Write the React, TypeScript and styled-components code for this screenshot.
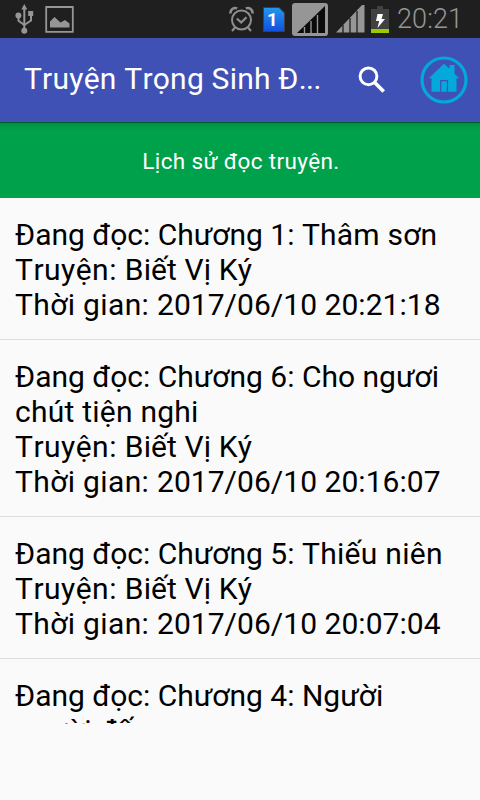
import React from "react";
import styled, { createGlobalStyle } from "styled-components";

const GlobalStyle = createGlobalStyle`
  * { box-sizing: border-box; }
  body { margin: 0; background: #fafafa; font-family: Roboto, sans-serif; font-kerning: none; }
`;

const Screen = styled.div`
  display: flex;
  flex-direction: column;
  width: 480px;
  height: 800px;
  overflow: hidden;
  background: #fafafa;
`;

const StatusBar = styled.header`
  display: flex;
  flex: none;
  justify-content: space-between;
  height: 38px;
  padding: 0 17px 0 14px;
  background: #1f1f1f;
`;

const StatusGroup = styled.div`
  display: flex;
  align-items: center;
`;

const StatusItem = styled.span<{ $before?: number }>`
  flex: none;
  margin-left: ${(p) => p.$before ?? 0}px;
  svg { display: block; }
`;

const Clock = styled.time`
  width: 66px;
  margin-left: 8px;
  color: #969696;
  font-size: 27px;
  font-weight: 300;
  line-height: 38px;
  letter-spacing: 0.1px;
  white-space: nowrap;
`;

const AppBar = styled.div`
  display: flex;
  flex: none;
  align-items: center;
  height: 84px;
  padding: 0 12px 0 24px;
  background: #3f51b5;
`;

const Title = styled.h1`
  flex: 1;
  margin: 0 0 2px;
  color: #fff;
  font-size: 30px;
  font-weight: 400;
  line-height: 40px;
  white-space: nowrap;
`;

const IconButton = styled.button<{ $size: number; $gap?: number }>`
  flex: none;
  width: ${(p) => p.$size}px;
  height: ${(p) => p.$size}px;
  margin: 0 ${(p) => p.$gap ?? 0}px 0 0;
  padding: 0;
  border: 0;
  background: none;
  svg { display: block; }
`;

const Banner = styled.h2`
  flex: none;
  height: 76px;
  margin: 0;
  padding-left: 2px;
  background: linear-gradient(#00602b 0, #00602b 1px, #008c40 1px, #009945 4px, #00a14b 9px);
  color: #fff;
  font-size: 22.5px;
  font-weight: 400;
  line-height: 78px;
  letter-spacing: 0.36px;
  text-align: center;
`;

const List = styled.ul`
  flex: none;
  height: 526px;
  margin: 0;
  padding: 0;
  overflow: hidden;
  list-style: none;
`;

const Entry = styled.li`
  padding: 19px 15px 17px;
  border-bottom: 1px solid #dedede;
  color: #000;
`;

const Line = styled.p`
  margin: 0;
  font-size: 30px;
  line-height: 35px;
  white-space: pre;
`;

const Run = styled.span<{ $tracking: number }>`
  letter-spacing: ${(p) => p.$tracking}px;
`;

type TextRun = [text: string, tracking: number];

const story: TextRun[] = [["Truyện: ", 0.48], ["Biết Vị Ký", 0.12]];
const readAt = (time: string): TextRun[] => [["Thời gian: ", 0.36], [time, 0.04]];

const entries: TextRun[][][] = [
  [
    [["Đang đọc: Chương 1: ", 0], ["Thâm sơn", 0.22]],
    story,
    readAt("2017/06/10 20:21:18"),
  ],
  [
    [["Đang đọc: Chương 6: Cho ngươi", 0]],
    [["chút tiện nghi", 0.24]],
    story,
    readAt("2017/06/10 20:16:07"),
  ],
  [
    [["Đang đọc: Chương 5: ", 0], ["Thiếu niên", 0.3]],
    story,
    readAt("2017/06/10 20:07:04"),
  ],
  [
    [["Đang đọc: Chương 4: Người", 0]],
    [["người đến", 0]],
  ],
];

const UsbIcon = () => (
  <svg width="20" height="30" viewBox="0 0 20 30" fill="none" stroke="#969696" strokeWidth="2">
    <path d="M10.3 27V5" />
    <path d="M4.5 11.5v5.3l5.8 4.2M17 10v6.5l-6.7 4.5" />
    <path d="M10.3 0l3 5.5h-6zM14.2 7h5v5h-5z" fill="#969696" stroke="none" />
    <circle cx="4.4" cy="11.5" r="3" fill="#969696" stroke="none" />
    <circle cx="10.3" cy="26.8" r="3" fill="#969696" stroke="none" />
  </svg>
);

const PictureIcon = () => (
  <svg width="30" height="27" viewBox="0 0 30 27">
    <path d="M1.2 1h26.6v24.8H1.2z" fill="none" stroke="#969696" strokeWidth="1.8" />
    <path d="M5 21.5v-6l4.5-4.5 6 5.5 4.5-2.5 4.5 3.5v4z" fill="#969696" />
  </svg>
);

const AlarmIcon = () => (
  <svg width="25" height="26" viewBox="0 0 25 26" fill="none" stroke="#8e8e8e">
    <circle cx="12.5" cy="14" r="9.5" strokeWidth="2" />
    <path d="M7.8 12.5l4.4 4 5.3-5.3M6 21.5L3 25M19 21.5l3 3.5" strokeWidth="2.2" />
    <path d="M1.6 7.6c-.7-3.7 3-6.6 6.6-5.2M23.4 7.6c.7-3.7-3-6.6-6.6-5.2" strokeWidth="2.6" />
  </svg>
);

const SimIcon = () => (
  <svg width="22" height="25" viewBox="0 0 22 25">
    <defs>
      <linearGradient id="sim" x1="0" y1="0" x2="0" y2="1">
        <stop offset="0" stopColor="#2299ee" />
        <stop offset="1" stopColor="#1150dd" />
      </linearGradient>
    </defs>
    <path d="M.5.5H16l5.5 5.5v18.5H.5z" fill="url(#sim)" stroke="#3c4148" />
    <text x="9.2" y="18.8" textAnchor="middle" fill="#fff" fontFamily="Roboto, sans-serif" fontSize="18.5" fontWeight="700">1</text>
  </svg>
);

const BoxedSignalIcon = () => (
  <svg width="36" height="33" viewBox="0 0 36 33">
    <rect width="36" height="33" rx="3" fill="#969696" />
    <path d="M33 3v27H5z" fill="#0b0b0b" />
    <path d="M12.5 24v6M19 18v12M25.5 12v18" stroke="#969696" strokeWidth="1.4" />
  </svg>
);

const SignalIcon = () => (
  <svg width="29" height="28" viewBox="0 0 29 28">
    <path d="M28.5 0H26L0 27.5h28.5z" fill="#969696" />
    <path d="M7 20v8M14 13v15M21 6v22" stroke="#1f1f1f" strokeWidth="1.3" />
  </svg>
);

const BatteryIcon = () => (
  <svg width="18" height="28" viewBox="0 0 18 28">
    <path d="M6 1h6v3h6v24H0V4h6z" fill="#414141" />
    <path d="M0 24h18v4H0z" fill="#99cc00" />
    <path d="M6.5 9H12l-1.5 5H14L6.5 23l1.7-7H5z" fill="#fff" />
  </svg>
);

const SearchIcon = () => (
  <svg width="28" height="28" viewBox="0 0 28 28" fill="none" stroke="#fff">
    <circle cx="10.5" cy="10.3" r="8.4" strokeWidth="3" />
    <path d="M16.7 16.5l9 9" strokeWidth="3.7" />
  </svg>
);

const HomeIcon = () => (
  <svg width="48" height="48" viewBox="0 0 48 48">
    <circle cx="24" cy="24" r="22" fill="none" stroke="#03a9dc" strokeWidth="3.2" />
    <path d="M24 7.7l5.5 5V9h5v8.7l4.7 4.6h-2.7v13.4h-25V22.3H8.8z" fill="#03a9dc" />
    <path d="M20.7 35.7V24.6h6.8v11.1" fill="none" stroke="#3f51b5" strokeWidth="1.2" />
  </svg>
);

export default function App() {
  return (
    <Screen>
      <GlobalStyle />
      <StatusBar>
        <StatusGroup>
          <StatusItem><UsbIcon /></StatusItem>
          <StatusItem $before={11}><PictureIcon /></StatusItem>
        </StatusGroup>
        <StatusGroup>
          <StatusItem><AlarmIcon /></StatusItem>
          <StatusItem $before={9}><SimIcon /></StatusItem>
          <StatusItem $before={7}><BoxedSignalIcon /></StatusItem>
          <StatusItem $before={8}><SignalIcon /></StatusItem>
          <StatusItem $before={6}><BatteryIcon /></StatusItem>
          <Clock>20:21</Clock>
        </StatusGroup>
      </StatusBar>
      <AppBar>
        <Title>
          <Run $tracking={0.22}>Truyện Trọng Sinh Đ</Run>
          <Run $tracking={-0.5}>...</Run>
        </Title>
        <IconButton $size={28} $gap={34} aria-label="Search"><SearchIcon /></IconButton>
        <IconButton $size={48} aria-label="Home"><HomeIcon /></IconButton>
      </AppBar>
      <Banner>Lịch sử đọc truyện.</Banner>
      <List>
        {entries.map((lines, i) => (
          <Entry key={i}>
            {lines.map((runs, j) => (
              <Line key={j}>
                {runs.map(([text, tracking]) => (
                  <Run key={text} $tracking={tracking}>{text}</Run>
                ))}
              </Line>
            ))}
          </Entry>
        ))}
      </List>
    </Screen>
  );
}
